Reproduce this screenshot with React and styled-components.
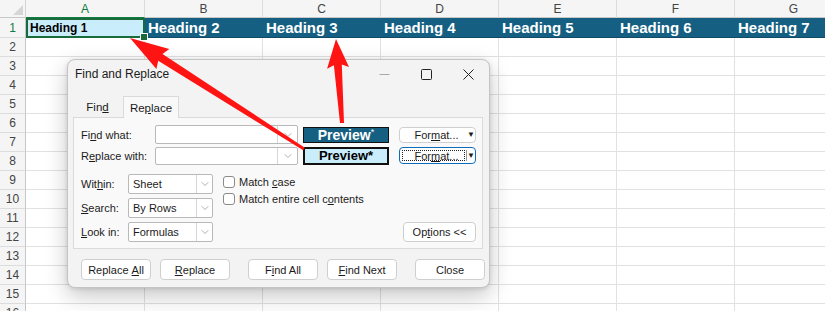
import React from "react";
import styled, { createGlobalStyle } from "styled-components";
import { ChevronDown } from "lucide-react";

const GlobalStyle = createGlobalStyle`
  html, body { margin: 0; padding: 0; background: #fff; }
  body {
    font-family: "Liberation Sans", Arial, sans-serif;
    width: 825px;
    height: 311px;
    overflow: hidden;
  }
  * { box-sizing: border-box; }
  u { text-underline-offset: 1px; }
`;

const Page = styled.div`
  position: relative;
  width: 825px;
  height: 311px;
  overflow: hidden;
`;

const Sheet = styled.div`
  display: flex;
  flex-direction: column;
`;

const Row = styled.div`
  display: grid;
  grid-template-columns: 26px 119px repeat(6, 118px);
  height: ${(p) => p.$h || 19}px;
`;

const Corner = styled.div`
  position: relative;
  background: #f5f5f5;
  border-right: 1px solid #d4d4d4;
  border-bottom: 1px solid #c8c8c8;
  &::after {
    content: "";
    position: absolute;
    right: 2px;
    bottom: 2px;
    border-left: 10px solid transparent;
    border-bottom: 10px solid #d6d6d6;
  }
`;

const ColHead = styled.div`
  background: #f5f5f5;
  border-right: 1px solid #dcdcdc;
  border-bottom: 1px solid ${(p) => (p.$active ? "#107c41" : "#c8c8c8")};
  color: ${(p) => (p.$active ? "#107c41" : "#444")};
  font-size: 12px;
  display: flex;
  align-items: center;
  justify-content: center;
`;

const RowHead = styled.div`
  background: #f5f5f5;
  border-right: 1px solid #c6c6c6;
  border-bottom: 1px solid #dcdcdc;
  color: ${(p) => (p.$active ? "#107c41" : "#444")};
  font-size: 12px;
  display: flex;
  align-items: center;
  justify-content: center;
`;

const Cell = styled.div`
  border-right: 1px solid #e1e1e1;
  border-bottom: 1px solid #e1e1e1;
`;

const ActiveCell = styled.div`
  position: relative;
  background: #caedfb;
  border: 2px solid #1a6b3c;
  font-size: 12px;
  font-weight: bold;
  color: #000;
  display: flex;
  align-items: center;
  padding-left: 2px;
  &::after {
    content: "";
    position: absolute;
    right: -5px;
    bottom: -5px;
    width: 6px;
    height: 6px;
    background: #1a6b3c;
    border: 1px solid #fff;
  }
`;

const HeadingCell = styled.div`
  background: #156082;
  color: #fff;
  font-size: 15px;
  font-weight: bold;
  display: flex;
  align-items: center;
  padding-left: 3px;
  white-space: nowrap;
  border-bottom: 1px solid #0f4a66;
`;

/* dialog */

const Dialog = styled.div`
  position: absolute;
  left: 67px;
  top: 59px;
  width: 423px;
  background: #f3f3f3;
  border: 1px solid #c4c4c4;
  border-radius: 8px;
  box-shadow: 0 8px 22px rgba(0, 0, 0, 0.22), 0 1px 4px rgba(0, 0, 0, 0.12);
  font-size: 11px;
  color: #1b1b1b;
  padding-bottom: 7px;
`;

const TitleBar = styled.div`
  display: flex;
  align-items: center;
  height: 28px;
  padding-left: 7px;
`;

const Title = styled.div`
  font-size: 12px;
  color: #1b1b1b;
`;

const Controls = styled.div`
  margin-left: auto;
  display: flex;
  height: 100%;
`;

const ControlButton = styled.div`
  width: 42px;
  height: 100%;
  display: flex;
  align-items: center;
  justify-content: center;
`;

const Body = styled.div`
  padding: 8px 6px 0 5px;
`;

const Tabs = styled.div`
  display: flex;
  height: 21px;
`;

const Tab = styled.div`
  width: ${(p) => p.$w}px;
  height: ${(p) => (p.$selected ? 22 : 21)}px;
  display: flex;
  align-items: center;
  justify-content: center;
  font-size: 11.5px;
  background: ${(p) => (p.$selected ? "#f9f9f9" : "transparent")};
  border: 1px solid ${(p) => (p.$selected ? "#dadada" : "transparent")};
  border-bottom: none;
  margin-left: ${(p) => (p.$selected ? 1 : 0)}px;
  position: relative;
  z-index: 1;
`;

const Panel = styled.div`
  background: #f9f9f9;
  border: 1px solid #dadada;
  padding: 7px 6px 6px 7px;
`;

const FieldRow = styled.div`
  display: flex;
  align-items: center;
  height: 19px;
  margin-top: ${(p) => p.$mt || 0}px;
`;

const Label = styled.div`
  width: ${(p) => p.$w}px;
  flex-shrink: 0;
  font-size: 11px;
  white-space: nowrap;
`;

const Combo = styled.div`
  width: ${(p) => p.$w}px;
  height: ${(p) => p.$h || 19}px;
  display: flex;
  background: #fff;
  border: 1px solid #b9b9b9;
  border-radius: 2px;
  flex-shrink: 0;
`;

const ComboText = styled.div`
  flex: 1;
  display: flex;
  align-items: center;
  padding-left: 4px;
  font-size: 11px;
`;

const ComboArrow = styled.div`
  width: ${(p) => p.$w || 16}px;
  border-left: 1px solid #d6d6d6;
  display: flex;
  align-items: center;
  justify-content: center;
  color: #7a7a7a;
`;

const Preview = styled.div`
  width: 86px;
  height: ${(p) => (p.$dark ? 16 : 18)}px;
  margin-left: 5px;
  flex-shrink: 0;
  display: flex;
  align-items: center;
  justify-content: center;
  font-weight: bold;
  font-size: ${(p) => (p.$dark ? 14 : 13)}px;
  background: ${(p) => (p.$dark ? "#156082" : "#caedfb")};
  color: ${(p) => (p.$dark ? "#fff" : "#000")};
  border: ${(p) => (p.$dark ? "1px" : "2px")} solid #111;
  sup {
    font-size: 9px;
    font-weight: normal;
    line-height: 0;
    position: relative;
    top: -3px;
  }
`;

const FormatButton = styled.div`
  width: 77px;
  height: ${(p) => (p.$focus ? 17 : 16)}px;
  margin-left: 10px;
  flex-shrink: 0;
  display: flex;
  align-items: stretch;
  background: #fff;
  border: 1px solid ${(p) => (p.$focus ? "#0f6cbd" : "#cfcfcf")};
  border-radius: 4px;
  font-size: 11px;
`;

const FormatLabel = styled.div`
  flex: 1;
  display: flex;
  align-items: center;
  justify-content: center;
  margin: 2px 1px 2px 2px;
  border: 1px dotted ${(p) => (p.$focus ? "#222" : "transparent")};
  padding-left: 6px;
`;

const FormatDrop = styled.div`
  width: 9px;
  display: flex;
  align-items: center;
  justify-content: center;
  font-size: 8px;
  border-left: 1px solid ${(p) => (p.$focus ? "#9a9a9a" : "transparent")};
  margin: 2px 0;
`;

const Options = styled.div`
  display: flex;
  margin-top: 9px;
`;

const OptionFields = styled.div`
  display: flex;
  flex-direction: column;
  gap: 4px;
`;

const OptionRow = styled.div`
  display: flex;
  align-items: center;
  height: 20px;
`;

const Checks = styled.div`
  display: flex;
  flex-direction: column;
  gap: 5px;
  margin-left: 10px;
  padding-top: 2px;
`;

const CheckRow = styled.div`
  display: flex;
  align-items: center;
  gap: 4px;
  font-size: 11px;
  height: 12px;
`;

const Box = styled.div`
  width: 12px;
  height: 12px;
  border: 1px solid #8a8a8a;
  border-radius: 3px;
  background: #fff;
`;

const Button = styled.div`
  width: ${(p) => p.$w || 70}px;
  height: ${(p) => p.$h || 21}px;
  margin-left: ${(p) => p.$ml || 0}px;
  display: flex;
  align-items: center;
  justify-content: center;
  background: #fff;
  border: 1px solid #cfcfcf;
  border-radius: 4px;
  font-size: 11px;
  color: #1b1b1b;
  flex-shrink: 0;
  white-space: pre;
`;

const OptionsButton = styled(Button)`
  margin-left: auto;
  align-self: flex-end;
`;

const Footer = styled.div`
  display: flex;
  margin-top: 10px;
  padding-left: 8px;
`;

const Overlay = styled.svg`
  position: absolute;
  left: 0;
  top: 0;
  pointer-events: none;
`;

function arrowPoints(tail, tip, tailW, neckW, headLen, headW) {
  const dx = tip[0] - tail[0];
  const dy = tip[1] - tail[1];
  const len = Math.hypot(dx, dy);
  const ux = dx / len;
  const uy = dy / len;
  const px = -uy;
  const py = ux;
  const nx = tip[0] - ux * headLen;
  const ny = tip[1] - uy * headLen;
  const pts = [
    [tail[0] + (px * tailW) / 2, tail[1] + (py * tailW) / 2],
    [nx + (px * neckW) / 2, ny + (py * neckW) / 2],
    [nx + (px * headW) / 2 - ux * 3, ny + (py * headW) / 2 - uy * 3],
    tip,
    [nx - (px * headW) / 2 - ux * 3, ny - (py * headW) / 2 - uy * 3],
    [nx - (px * neckW) / 2, ny - (py * neckW) / 2],
    [tail[0] - (px * tailW) / 2, tail[1] - (py * tailW) / 2],
  ];
  return pts.map((p) => p.map((v) => v.toFixed(1)).join(",")).join(" ");
}

const letters = ["A", "B", "C", "D", "E", "F", "G"];

function Chevron() {
  return <ChevronDown size={12} strokeWidth={1.2} />;
}

function Select({ value, w = 85 }) {
  return (
    <Combo $w={w} $h={20}>
      <ComboText>{value}</ComboText>
      <ComboArrow>
        <Chevron />
      </ComboArrow>
    </Combo>
  );
}

function Format({ focus }) {
  return (
    <FormatButton $focus={focus}>
      <FormatLabel $focus={focus}>
        For<u>m</u>at...
      </FormatLabel>
      <FormatDrop $focus={focus}>▼</FormatDrop>
    </FormatButton>
  );
}

export default function App() {
  const rows = [];
  for (let r = 2; r <= 16; r++) {
    rows.push(
      <Row key={r}>
        <RowHead>{r}</RowHead>
        {letters.map((l) => (
          <Cell key={l} />
        ))}
      </Row>
    );
  }

  return (
    <Page>
      <GlobalStyle />
      <Sheet>
        <Row $h={18}>
          <Corner />
          {letters.map((l, i) => (
            <ColHead key={l} $active={i === 0}>
              {l}
            </ColHead>
          ))}
        </Row>
        <Row $h={20}>
          <RowHead $active>1</RowHead>
          <ActiveCell>Heading 1</ActiveCell>
          {[2, 3, 4, 5, 6, 7].map((n) => (
            <HeadingCell key={n}>Heading {n}</HeadingCell>
          ))}
        </Row>
        {rows}
      </Sheet>

      <Dialog>
        <TitleBar>
          <Title>Find and Replace</Title>
          <Controls>
            <ControlButton>
              <svg width="11" height="11" viewBox="0 0 11 11">
                <line x1="0.5" y1="5.5" x2="10.5" y2="5.5" stroke="#a8a8a8" strokeWidth="1" />
              </svg>
            </ControlButton>
            <ControlButton>
              <svg width="11" height="11" viewBox="0 0 11 11">
                <rect x="0.5" y="0.5" width="10" height="10" rx="1" fill="none" stroke="#222" strokeWidth="1" />
              </svg>
            </ControlButton>
            <ControlButton>
              <svg width="11" height="11" viewBox="0 0 11 11">
                <path d="M0.5 0.5 L10.5 10.5 M10.5 0.5 L0.5 10.5" stroke="#222" strokeWidth="1" />
              </svg>
            </ControlButton>
          </Controls>
        </TitleBar>
        <Body>
          <Tabs>
            <Tab $w={49}>
              Fin<u>d</u>
            </Tab>
            <Tab $w={56} $selected>
              Re<u>p</u>lace
            </Tab>
          </Tabs>
          <Panel>
            <FieldRow>
              <Label $w={74}>
                Fi<u>n</u>d what:
              </Label>
              <Combo $w={143}>
                <ComboText />
                <ComboArrow $w={20}>
                  <Chevron />
                </ComboArrow>
              </Combo>
              <Preview $dark>
                Preview<sup>*</sup>
              </Preview>
              <Format />
            </FieldRow>
            <FieldRow $mt={2}>
              <Label $w={74}>
                R<u>e</u>place with:
              </Label>
              <Combo $w={143} $h={18}>
                <ComboText />
                <ComboArrow $w={20}>
                  <Chevron />
                </ComboArrow>
              </Combo>
              <Preview>Preview*</Preview>
              <Format focus />
            </FieldRow>

            <Options>
              <OptionFields>
                <OptionRow>
                  <Label $w={47}>
                    Wit<u>h</u>in:
                  </Label>
                  <Select value="Sheet" />
                </OptionRow>
                <OptionRow>
                  <Label $w={47}>
                    <u>S</u>earch:
                  </Label>
                  <Select value="By Rows" />
                </OptionRow>
                <OptionRow>
                  <Label $w={47}>
                    <u>L</u>ook in:
                  </Label>
                  <Select value="Formulas" />
                </OptionRow>
              </OptionFields>
              <Checks>
                <CheckRow>
                  <Box />
                  <span>
                    Match <u>c</u>ase
                  </span>
                </CheckRow>
                <CheckRow>
                  <Box />
                  <span>
                    Match entire cell c<u>o</u>ntents
                  </span>
                </CheckRow>
              </Checks>
              <OptionsButton $w={73} $h={20}>
                Op<u>t</u>ions &lt;&lt;
              </OptionsButton>
            </Options>
          </Panel>
          <Footer>
            <Button>
              {"Replace "}
              <u>A</u>ll
            </Button>
            <Button $ml={9}>
              <u>R</u>eplace
            </Button>
            <Button $ml={18}>
              F<u>i</u>nd All
            </Button>
            <Button $ml={9}>
              <u>F</u>ind Next
            </Button>
            <Button $ml={18}>Close</Button>
          </Footer>
        </Body>
      </Dialog>

      <Overlay width="825" height="311" viewBox="0 0 825 311">
        <polygon points={arrowPoints([304, 149], [130, 38], 3, 8, 36, 24)} fill="#ff1414" />
        <polygon points={arrowPoints([342, 123], [336, 39], 4, 8, 26, 22)} fill="#ff1414" />
      </Overlay>
    </Page>
  );
}
